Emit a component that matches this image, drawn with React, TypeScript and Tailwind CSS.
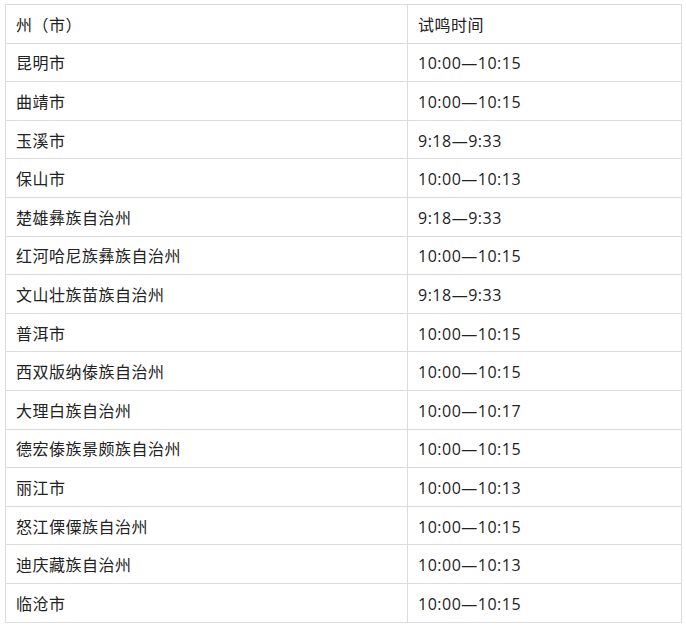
const ROWS: [string, string][] = [
  ["昆明市", "10:00—10:15"],
  ["曲靖市", "10:00—10:15"],
  ["玉溪市", "9:18—9:33"],
  ["保山市", "10:00—10:13"],
  ["楚雄彝族自治州", "9:18—9:33"],
  ["红河哈尼族彝族自治州", "10:00—10:15"],
  ["文山壮族苗族自治州", "9:18—9:33"],
  ["普洱市", "10:00—10:15"],
  ["西双版纳傣族自治州", "10:00—10:15"],
  ["大理白族自治州", "10:00—10:17"],
  ["德宏傣族景颇族自治州", "10:00—10:15"],
  ["丽江市", "10:00—10:13"],
  ["怒江傈僳族自治州", "10:00—10:15"],
  ["迪庆藏族自治州", "10:00—10:13"],
  ["临沧市", "10:00—10:15"],
];

export default function App() {
  return (
    <div
      className="w-[686px] h-[627px] bg-white pt-[4px] pl-[5px]"
      style={{ fontFamily: '"Open Sans", "Noto Sans CJK SC", sans-serif' }}
    >
      <table className="border-collapse w-[677px] text-[16px] tracking-[0.5px] text-[#222]">
        <tbody>
          <tr className="h-[38.6px]">
            <td className="border border-[#dcdcdc] w-[402px] px-[10px] pt-[2px] pb-0 align-middle">州（市）</td>
            <td className="border border-[#dcdcdc] px-[10px] pt-[2px] pb-0 align-middle">试鸣时间</td>
          </tr>
          {ROWS.map(([city, time]) => (
            <tr key={city} className="h-[38.6px]">
              <td className="border border-[#dcdcdc] px-[10px] pt-[2px] pb-0 align-middle">{city}</td>
              <td className="border border-[#dcdcdc] px-[10px] pt-[2px] pb-0 align-middle">{time}</td>
            </tr>
          ))}
        </tbody>
      </table>
    </div>
  );
}
